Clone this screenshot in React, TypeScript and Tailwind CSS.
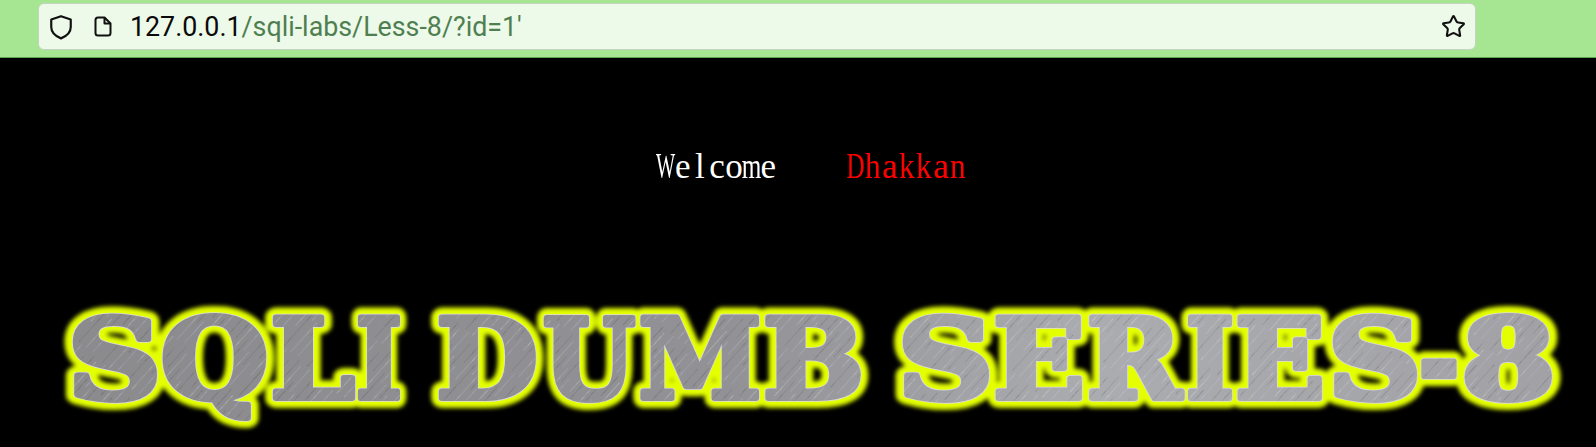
import React from 'react';
import { Star } from 'lucide-react';

// banner letters: glyph, left edge, ink width, stretch to make up for the glyph's side bearings
const LOGO: [string, number, number, number][] = [
    ['S', 73, 83, 1.2], ['Q', 162, 105, 1.08], ['L', 270, 85, 1.06], ['I', 355, 48, 1.08],
    ['D', 436, 102, 1.05], ['U', 541, 96, 1.02], ['M', 637, 126, 1.02], ['B', 763, 101, 1.06],
    ['S', 903, 85, 1.2], ['E', 993, 92, 1.06], ['R', 1085, 98, 1.02], ['I', 1185, 50, 1.08], ['E', 1235, 90, 1.06], ['S', 1333, 83, 1.2],
    ['-', 1423, 32, 1.45], ['8', 1466, 85, 1.18],
];
const SPACE_AFTER = [3, 7];

const Logo = () => (
    <svg viewBox="0 280 1596 167" className="block w-[1596px] h-[167px]">
        <defs>
            <linearGradient id="metal" gradientUnits="userSpaceOnUse" x1="70" y1="0" x2="1536" y2="0">
                <stop offset="0" stopColor="#8b8b8e" />
                <stop offset="0.45" stopColor="#929296" />
                <stop offset="0.7" stopColor="#abacb0" />
                <stop offset="1" stopColor="#a2a2a6" />
            </linearGradient>
            <pattern id="brush" patternUnits="userSpaceOnUse" width="31" height="67" patternTransform="rotate(42)">
                <rect x="3" y="4" width="1" height="40" fill="#ffffff" opacity="0.14" />
                <rect x="8" y="20" width="1" height="47" fill="#000000" opacity="0.08" />
                <rect x="12" y="0" width="1" height="30" fill="#d0d0ff" opacity="0.16" />
                <rect x="17" y="28" width="1" height="39" fill="#ffffff" opacity="0.12" />
                <rect x="21" y="8" width="1" height="34" fill="#000000" opacity="0.07" />
                <rect x="25" y="35" width="1" height="30" fill="#d0d0ff" opacity="0.14" />
                <rect x="29" y="0" width="1" height="26" fill="#000000" opacity="0.08" />
            </pattern>
            <filter id="soft" x="-5%" y="-30%" width="110%" height="160%">
                <feGaussianBlur stdDeviation="2" />
            </filter>
        </defs>
        <g filter="url(#soft)">
            <use href="#letters" fill="#e4ff00" stroke="#e4ff00" strokeWidth={20} />
        </g>
        <use href="#letters" fill="#dcdcdc" stroke="#dcdcdc" strokeWidth={7.5} />
        <use href="#letters" fill="url(#metal)" stroke="url(#metal)" strokeWidth={6} />
        <g fill="url(#brush)" stroke="url(#brush)" strokeWidth={6}>
            <text id="letters" y={398} strokeLinejoin="round" style={{ fontFamily: '"DejaVu Serif", serif', fontWeight: 700, fontSize: 110 }}>
                {LOGO.map(([c, x, w, k], i) => {
                    const len = w * k - 6;
                    return (
                        <React.Fragment key={i}>
                            <tspan x={x + w / 2 - len / 2} textLength={len} lengthAdjust="spacingAndGlyphs">{c}</tspan>
                            {SPACE_AFTER.includes(i) ? ' ' : ''}
                        </React.Fragment>
                    );
                })}
            </text>
        </g>
    </svg>
);

const Mono: React.FC<{ text: string; className: string }> = ({ text, className }) => (
    <span className={`flex ${className}`}>
        {text.split('').map((c, i) => (
            <span key={i} className="w-[17.14px] flex justify-center">
                <span className={c === 'W' ? 'scale-x-[0.58]' : c === 'm' || c === 'D' ? 'scale-x-[0.72]' : c === 'h' || c === 'k' || c === 'n' ? 'scale-x-[0.9]' : ''}>{c}</span>
            </span>
        ))}
    </span>
);

export default function App() {
    return (
        <div className="w-[1596px] h-[447px] overflow-hidden bg-black flex flex-col">
            <header className="h-[58px] shrink-0 bg-[#a6e692] border-b border-[#5fa650] pl-[38px] pr-[120px] pt-[3px]">
                <div className="h-[47px] bg-[#edf9e9] rounded-md border border-[#c4d4c0] flex items-center pl-[10px] pr-[10px]">
                    <svg width="24" height="26" viewBox="0 0 22 24" fill="none" stroke="#111" strokeWidth="2" strokeLinejoin="round" className="shrink-0">
                        <path d="M11 2 L20 5 V12 C20 17 16 20.5 11 22.5 C6 20.5 2 17 2 12 V5 Z" />
                    </svg>
                    <svg width="18" height="21" viewBox="0 0 18 21" fill="none" stroke="#111" strokeWidth="2" strokeLinejoin="round" className="shrink-0 ml-[21px]">
                        <path d="M4 1.5 H10.5 L16.5 7.5 V17 C16.5 18.5 15.5 19.5 14 19.5 H4 C2.5 19.5 1.5 18.5 1.5 17 V4 C1.5 2.5 2.5 1.5 4 1.5 Z" />
                        <path d="M10.5 1.5 V7.5 H16.5" />
                    </svg>
                    <div className="ml-[18px] pt-[2px] text-[26.8px] font-['Roboto',sans-serif] whitespace-pre">
                        <span className="text-[#0a0a0a]">127.0.0.1</span>
                        <span className="text-[#4f7f50]">/sqli-labs/Less-8/?id=1'</span>
                    </div>
                    <Star size={25} strokeWidth={2} className="ml-auto text-[#111] -mr-[1px]" />
                </div>
            </header>
            <main className="flex-1 flex flex-col">
                <div className="h-[222px] pt-[84px] pl-[657px] flex gap-[70px] text-[35px] leading-[50px] font-['Liberation_Serif',serif]">
                    <Mono text="Welcome" className="text-white" />
                    <Mono text="Dhakkan" className="text-[#ff0000]" />
                </div>
                <Logo />
            </main>
        </div>
    );
}
